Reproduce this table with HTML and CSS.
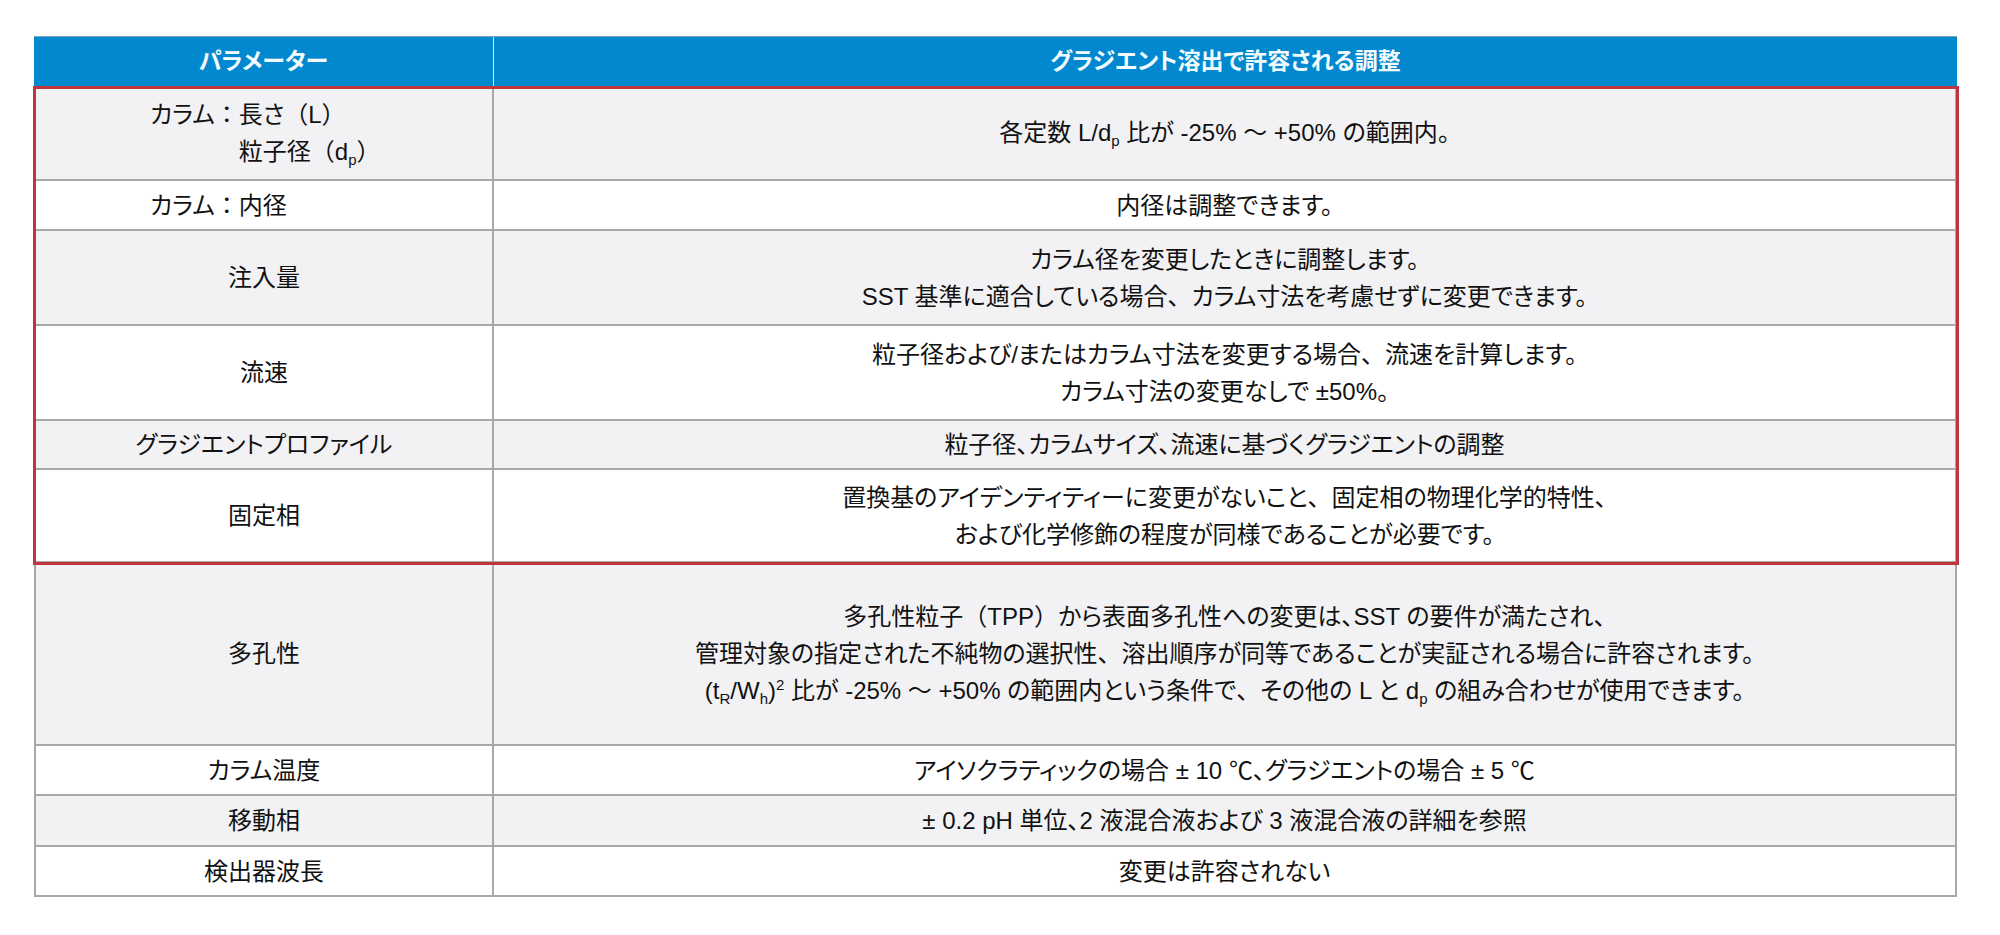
FILE: index.html
```html
<!DOCTYPE html>
<html lang="ja">
<head>
<meta charset="utf-8">
<title>グラジエント溶出で許容される調整</title>
<link rel="stylesheet" href="styles.css">
</head>
<body>
<div class="wrap">
  <div class="table">
    <div class="row head">
      <div class="cell left"><span>パラメーター</span></div>
      <div class="cell right"><span>グラジエント溶出で許容される調整</span></div>
    </div>
    <div class="row h95 alt">
      <div class="cell left start">
        <div class="combo">
          <span class="fw">カラム<span class="nopalt">：</span></span>
          <div class="lines">
            <div>長さ<span class="nopalt">（</span>L<span class="nopalt">）</span></div>
            <div>粒子径<span class="nopalt">（</span>d<span class="sub">p</span><span class="nopalt">）</span></div>
          </div>
        </div>
      </div>
      <div class="cell right"><span>各定数 L/d<span class="sub">p</span> 比が -25% ～ +50% の範囲内。</span></div>
    </div>
    <div class="row h50">
      <div class="cell left start"><span>カラム<span class="nopalt">：</span>内径</span></div>
      <div class="cell right"><span>内径は調整できます。</span></div>
    </div>
    <div class="row h95 alt">
      <div class="cell left"><span>注入量</span></div>
      <div class="cell right"><div class="lines c">
        <div>カラム径を変更したときに調整します。</div>
        <div>SST 基準に適合している場合<span class="nopalt">、</span>カラム寸法を考慮せずに変更できます。</div>
      </div></div>
    </div>
    <div class="row h95">
      <div class="cell left"><span>流速</span></div>
      <div class="cell right"><div class="lines c">
        <div>粒子径および/またはカラム寸法を変更する場合<span class="nopalt">、</span>流速を計算します。</div>
        <div>カラム寸法の変更なしで ±50%。</div>
      </div></div>
    </div>
    <div class="row h49 alt">
      <div class="cell left"><span>グラジエントプロファイル</span></div>
      <div class="cell right"><span>粒子径、カラムサイズ、流速に基づくグラジエントの調整</span></div>
    </div>
    <div class="row h93">
      <div class="cell left"><span>固定相</span></div>
      <div class="cell right"><div class="lines c">
        <div>置換基のアイデンティティーに変更がないこと<span class="nopalt">、</span>固定相の物理化学的特性、</div>
        <div>および化学修飾の程度が同様であることが必要です。</div>
      </div></div>
    </div>
    <div class="row h183 alt">
      <div class="cell left"><span>多孔性</span></div>
      <div class="cell right"><div class="lines c">
        <div>多孔性粒子<span class="nopalt">（</span>TPP<span class="nopalt">）</span>から表面多孔性への変更は、SST の要件が満たされ、</div>
        <div>管理対象の指定された不純物の選択性<span class="nopalt">、</span>溶出順序が同等であることが実証される場合に許容されます。</div>
        <div>(t<span class="sub">R</span>/W<span class="sub">h</span>)<span class="sup">2</span> 比が -25% ～ +50% の範囲内という条件で<span class="nopalt">、</span>その他の L と d<span class="sub">p</span> の組み合わせが使用できます。</div>
      </div></div>
    </div>
    <div class="row h50">
      <div class="cell left"><span>カラム温度</span></div>
      <div class="cell right"><span>アイソクラティックの場合 ± 10 ℃、グラジエントの場合 ± 5 ℃</span></div>
    </div>
    <div class="row h51 alt">
      <div class="cell left"><span>移動相</span></div>
      <div class="cell right"><span>± 0.2 pH 単位、2 液混合液および 3 液混合液の詳細を参照</span></div>
    </div>
    <div class="row h50">
      <div class="cell left"><span>検出器波長</span></div>
      <div class="cell right"><span>変更は許容されない</span></div>
    </div>
  </div>
  <div class="highlight"></div>
</div>
</body>
</html>
```

FILE: styles.css
```css
html, body {
  margin: 0;
  padding: 0;
  background: #ffffff;
}

body {
  font-family: "Liberation Sans", "Noto Sans CJK JP", sans-serif;
  font-size: 24px;
  color: #111111;
  font-feature-settings: "palt";
}

.wrap {
  position: relative;
  width: 2000px;
  height: 935px;
  padding-top: 36px;
  box-sizing: border-box;
}

.table {
  margin-left: 34px;
  width: 1923px;
  box-sizing: border-box;
  border-left: 2px solid #a8a8a8;
  border-right: 2px solid #a8a8a8;
}

.row {
  display: grid;
  grid-template-columns: 458px 1fr;
  box-sizing: border-box;
  border-bottom: 2px solid #a8a8a8;
  background: #ffffff;
}

.row.alt {
  background: #f2f2f4;
}

.cell {
  display: flex;
  align-items: center;
  justify-content: center;
  text-align: center;
  line-height: 37px;
  white-space: nowrap;
}

.cell.left {
  border-right: 2px solid #a8a8a8;
}

.cell.start {
  justify-content: flex-start;
  padding-left: 114px;
}

.head {
  height: 50px;
  background: #0288cf;
  border-top: 1px solid #7fa6bd;
  border-bottom: none;
  margin-left: -2px;
  margin-right: -2px;
  grid-template-columns: 460px 1fr;
}

.head .cell {
  color: #f2fbff;
  font-weight: bold;
  font-size: 23px;
}

.head .cell.left {
  border-right: 1px solid #cdeeff;
}

.h95 { height: 95px; }
.h93 { height: 93px; }
.h50 { height: 50px; }
.h51 { height: 51px; }
.h49 { height: 49px; }
.h183 { height: 183px; }

.combo {
  display: flex;
  align-items: flex-start;
}

.lines {
  display: flex;
  flex-direction: column;
  text-align: left;
}

.lines.c {
  text-align: center;
  align-items: center;
}

.nopalt {
  font-feature-settings: normal;
}

.sub {
  font-size: 15px;
  vertical-align: -5px;
  line-height: 0;
}

.sup {
  font-size: 15px;
  vertical-align: 9px;
  line-height: 0;
}

.highlight {
  position: absolute;
  left: 33px;
  top: 86px;
  width: 1926px;
  height: 479px;
  box-sizing: border-box;
  border: 3px solid #c2343d;
  pointer-events: none;
}
```
